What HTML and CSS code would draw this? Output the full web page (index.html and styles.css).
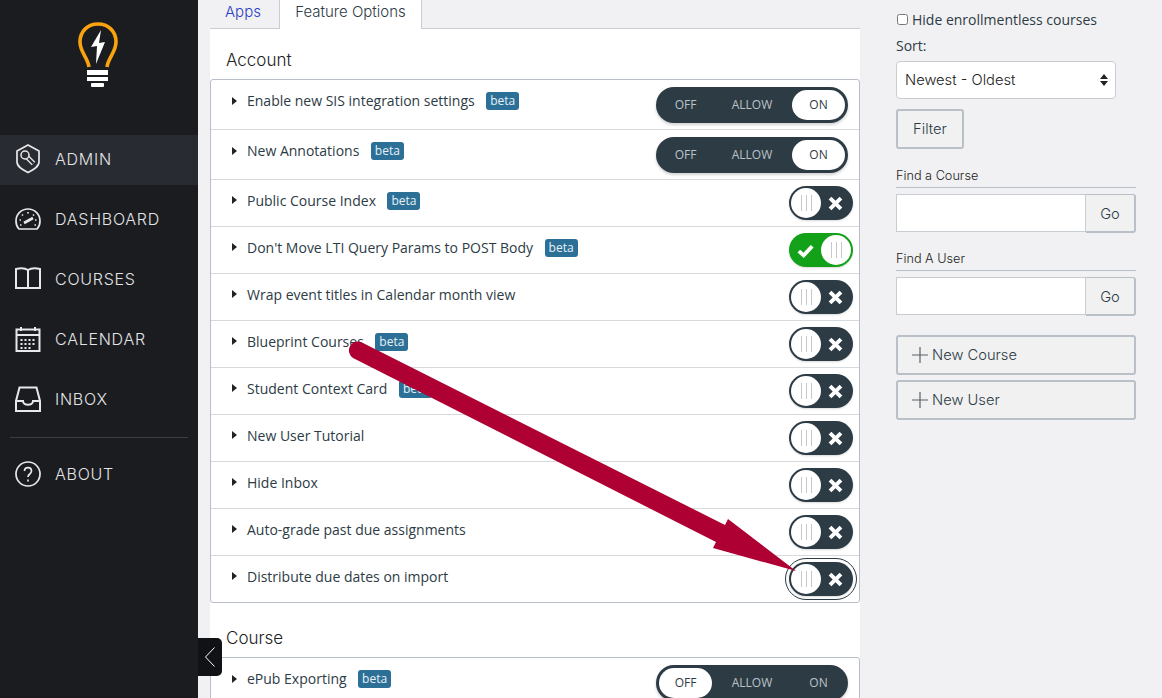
FILE: index.html
```html
<!DOCTYPE html>
<html>
	<head>
		<meta charset="UTF-8">
		<title>Feature Options</title>
		<link rel="stylesheet" href="styles.css">
	</head>
	<body>
		<nav class="sidebar">
			<div class="logo">
				<svg width="40" height="66" viewBox="0 0 40 66">
					<path d="M11 45 C10 36 2 30 2 20 C2 9 10 2 20 2 C30 2 38 9 38 20 C38 30 30 36 29 45" fill="none" stroke="#f9a30f" stroke-width="3.6"/>
					<path d="M23 8 L13 25 L19 24 L18 42 L27 20 L21 21 Z" fill="#fff"/>
					<rect x="9" y="48" width="21" height="5" fill="#fff"/>
					<rect x="9" y="55" width="21" height="4" fill="#fff"/>
					<rect x="13" y="61" width="13" height="4" rx="1" fill="#fff"/>
				</svg>
			</div>
			<a class="nav-item active" href="#">
				<svg class="nav-icon" viewBox="0 0 26 30"><path d="M13 1 L24 7 V18 C24 23 18 26 13 28.500 C8 26 2 23 2 18 V7 Z"/><path class="key" d="M11 12 L18.500 19.500"/><path class="key-in" d="M11 12 L18.500 19.500"/><circle class="key-head" cx="10" cy="11" r="4"/></svg>
				ADMIN
			</a>
			<a class="nav-item" href="#">
				<svg class="nav-icon" viewBox="0 0 26 24"><path d="M4 22 C2 20 1 17 1 14 C1 7 6.500 2 13 2 C19.500 2 25 7 25 14 C25 17 24 20 22 22 Z"/><path d="M9 16 L18 11" stroke-width="2.600"/><path d="M13 5 V6.500 M7 7.500 L8 8.500 M19 7.500 L18 8.500 M4.500 13 H6 M20 13 H21.500 M5 18 H6.500 M19.500 18 H21"/></svg>
				DASHBOARD
			</a>
			<a class="nav-item" href="#">
				<svg class="nav-icon thick" viewBox="0 0 26 24"><path d="M1 2 C5 1 10 1 13 3 C16 1 21 1 25 2 V21 H1 Z"/><path d="M13 3 V22"/></svg>
				COURSES
			</a>
			<a class="nav-item" href="#">
				<svg class="nav-icon thick" viewBox="0 0 26 26"><path d="M1.500 3.500 H24.500 V25 H1.500 Z"/><path d="M1.500 9 H24.500 M6 1 V5 M20 1 V5"/><path d="M5.500 14 H7.500 M9.500 14 H11.500 M13.500 14 H15.500 M17.500 14 H19.500 M5.500 18 H7.500 M9.500 18 H11.500 M13.500 18 H15.500 M17.500 18 H19.500 M5.500 22 H7.500 M9.500 22 H11.500 M13.500 22 H15.500"/></svg>
				CALENDAR
			</a>
			<a class="nav-item" href="#">
				<svg class="nav-icon thick" viewBox="0 0 26 26"><path d="M1 25 V15 L4.500 1.500 H21.500 L25 15 V25 Z"/><path d="M1 15 H8 C8 20 18 20 18 15 H25"/></svg>
				INBOX
			</a>
			<hr class="nav-rule">
			<a class="nav-item" href="#">
				<svg class="nav-icon" viewBox="0 0 26 26"><circle cx="13" cy="13" r="12"/><path d="M9.500 10 C9.500 5.500 16.500 5.500 16.500 10 C16.500 13 13 13 13 16"/><path d="M13 18.500 V20.500"/></svg>
				ABOUT
			</a>
		</nav>

		<a class="collapse" href="#">
			<svg width="12" height="22" viewBox="0 0 12 22"><path d="M10.500 1.500 L1.500 11 L10.500 20.500" fill="none" stroke="#fff" stroke-width="1"/></svg>
		</a>

		<div class="main">
			<ul class="tabs">
				<li><a href="#">Apps</a></li>
				<li class="current">Feature Options</li>
			</ul>

			<h2>Account</h2>
			<div class="features">
				<div class="row tall"><span class="caret"></span><span class="name">Enable new SIS integration settings</span><span class="beta">beta</span>
					<div class="tri"><span>OFF</span><span>ALLOW</span><span class="picked">ON</span></div></div>
				<div class="row tall"><span class="caret"></span><span class="name">New Annotations</span><span class="beta">beta</span>
					<div class="tri"><span>OFF</span><span>ALLOW</span><span class="picked">ON</span></div></div>
				<div class="row"><span class="caret"></span><span class="name">Public Course Index</span><span class="beta">beta</span>
					<div class="switch"><span class="knob"><i></i></span><svg class="mark" viewBox="0 0 14 14"><path d="M2.500 2.500 L11.500 11.500 M11.500 2.500 L2.500 11.500"/></svg></div></div>
				<div class="row"><span class="caret"></span><span class="name">Don't Move LTI Query Params to POST Body</span><span class="beta">beta</span>
					<div class="switch on"><svg class="mark" viewBox="0 0 14 14"><path d="M1.500 7.500 L5.500 11 L12.500 3.500"/></svg><span class="knob"><i></i></span></div></div>
				<div class="row"><span class="caret"></span><span class="name">Wrap event titles in Calendar month view</span>
					<div class="switch"><span class="knob"><i></i></span><svg class="mark" viewBox="0 0 14 14"><path d="M2.500 2.500 L11.500 11.500 M11.500 2.500 L2.500 11.500"/></svg></div></div>
				<div class="row"><span class="caret"></span><span class="name">Blueprint Courses</span><span class="beta">beta</span>
					<div class="switch"><span class="knob"><i></i></span><svg class="mark" viewBox="0 0 14 14"><path d="M2.500 2.500 L11.500 11.500 M11.500 2.500 L2.500 11.500"/></svg></div></div>
				<div class="row"><span class="caret"></span><span class="name">Student Context Card</span><span class="beta">beta</span>
					<div class="switch"><span class="knob"><i></i></span><svg class="mark" viewBox="0 0 14 14"><path d="M2.500 2.500 L11.500 11.500 M11.500 2.500 L2.500 11.500"/></svg></div></div>
				<div class="row"><span class="caret"></span><span class="name">New User Tutorial</span>
					<div class="switch"><span class="knob"><i></i></span><svg class="mark" viewBox="0 0 14 14"><path d="M2.500 2.500 L11.500 11.500 M11.500 2.500 L2.500 11.500"/></svg></div></div>
				<div class="row"><span class="caret"></span><span class="name">Hide Inbox</span>
					<div class="switch"><span class="knob"><i></i></span><svg class="mark" viewBox="0 0 14 14"><path d="M2.500 2.500 L11.500 11.500 M11.500 2.500 L2.500 11.500"/></svg></div></div>
				<div class="row"><span class="caret"></span><span class="name">Auto-grade past due assignments</span>
					<div class="switch"><span class="knob"><i></i></span><svg class="mark" viewBox="0 0 14 14"><path d="M2.500 2.500 L11.500 11.500 M11.500 2.500 L2.500 11.500"/></svg></div></div>
				<div class="row"><span class="caret"></span><span class="name">Distribute due dates on import</span>
					<div class="switch focus"><span class="knob"><i></i></span><svg class="mark" viewBox="0 0 14 14"><path d="M2.500 2.500 L11.500 11.500 M11.500 2.500 L2.500 11.500"/></svg></div></div>
			</div>

			<h2 class="second">Course</h2>
			<div class="features">
				<div class="row tall"><span class="caret"></span><span class="name">ePub Exporting</span><span class="beta">beta</span>
					<div class="tri"><span class="picked">OFF</span><span>ALLOW</span><span>ON</span></div></div>
			</div>
		</div>

		<aside class="side">
			<label class="check"><input type="checkbox">Hide enrollmentless courses</label>
			<div class="sort-label">Sort:</div>
			<div class="select"><span>Newest - Oldest</span>
				<svg width="8" height="12" viewBox="0 0 8 12"><path d="M4 0 L8 5 H0 Z M4 12 L0 7 H8 Z" fill="#222"/></svg>
			</div>
			<button class="btn filter">Filter</button>
			<div class="find first">Find a Course</div>
			<div class="search"><div class="field"></div><button class="btn go">Go</button></div>
			<div class="find">Find A User</div>
			<div class="search"><div class="field"></div><button class="btn go">Go</button></div>
			<button class="btn wide new-course"><svg width="16" height="16" viewBox="0 0 16 16"><path d="M0 8 H16 M8 0 V16" stroke="#5a626b" stroke-width="1.200"/></svg>New Course</button>
			<button class="btn wide"><svg width="16" height="16" viewBox="0 0 16 16"><path d="M0 8 H16 M8 0 V16" stroke="#5a626b" stroke-width="1.200"/></svg>New User</button>
		</aside>

		<svg class="arrow" width="1162" height="698" viewBox="0 0 1162 698">
			<path d="M361 342 L725 525 L728 519 L796 571 L713 548 L716 542 L353 358 A9 9 0 0 1 361 342 Z" fill="#ae0033"/>
		</svg>
	</body>
</html>
```

FILE: styles.css
```css
*{
	margin: 0;
	padding: 0;
	box-sizing: border-box;
}
li{
	list-style: none;
}
a{
	text-decoration: none;
}
html,body{
	height: 698px;
	overflow: hidden;
}
body{
	display: flex;
	background: #f1f1f3;
	font-family: "Open Sans", "Liberation Sans", sans-serif;
	color: #2d3b45;
	position: relative;
}

/* left nav */
.sidebar{
	width: 198px;
	flex: none;
	background: #1a1c20;
	display: flex;
	flex-direction: column;
	gap: 10px;
	padding-top: 135px;
	position: relative;
}
.logo{
	position: absolute;
	top: 22px;
	left: 78px;
}
.nav-item{
	height: 50px;
	display: flex;
	align-items: center;
	padding: 0 0 2px 15px;
	color: #e4e4e6;
	font-family: Inter, "Liberation Sans", sans-serif;
	font-size: 16px;
	font-weight: 300;
	letter-spacing: .75px;
}
.nav-item.active{
	background: #282b32;
}
.nav-icon{
	width: 26px;
	height: 30px;
	margin-right: 14px;
	fill: none;
	stroke: #e8e8ea;
	stroke-width: 1.700;
}
.nav-icon.thick{
	stroke-width: 2;
}
.nav-icon .key{
	stroke-width: 5;
}
.nav-icon .key-in{
	stroke: #282b32;
	stroke-width: 2.400;
}
.nav-icon .key-head{
	fill: #282b32;
	stroke-width: 1.500;
}
.nav-rule{
	border: 0;
	border-top: 1px solid #3c3e43;
	margin: 2px 10px;
}
.collapse{
	position: absolute;
	left: 198px;
	top: 638px;
	width: 24px;
	height: 38px;
	background: #111215;
	border-radius: 0 5px 5px 0;
	display: flex;
	align-items: center;
	justify-content: center;
	z-index: 2;
}

/* middle column */
.main{
	width: 650px;
	flex: none;
	margin-left: 12px;
	background: #fff;
}
.tabs{
	display: flex;
	height: 29px;
	background: #f1f1f3;
	border-bottom: 1px solid #c7cdd1;
	font-family: Inter, "Liberation Sans", sans-serif;
	font-size: 15px;
	font-weight: 300;
}
.tabs li{
	width: 69px;
	padding: 2px 0 0 15px;
}
.tabs a{
	color: #2b3fc4;
}
.tabs .current{
	width: 143px;
	background: #fff;
	border: solid #c7cdd1;
	border-width: 0 1px;
	height: 29px;
	padding: 2px 0 0;
	text-align: center;
	color: #2d3b45;
}
h2{
	font-family: Inter, "Liberation Sans", sans-serif;
	font-size: 17px;
	font-weight: 300;
	line-height: 22px;
	padding: 20px 0 8px 16px;
	height: 50px;
	color: #222;
}
h2.second{
	height: 54px;
	padding-top: 24px;
}
.features{
	border: 1px solid #b9bfc8;
	border-radius: 3px;
}
.row{
	height: 47px;
	border-bottom: 1px solid #d7d9dc;
	display: flex;
	align-items: center;
	padding: 0 6px 6px 21px;
	font-size: 14px;
}
.row.tall{
	height: 50px;
	padding-right: 11px;
	padding-bottom: 8px;
}
.row:last-child{
	border-bottom: 0;
	height: 46px;
}
.row.tall:last-child{
	height: 49px;
}
.caret{
	width: 0;
	height: 0;
	border-left: 5px solid #222;
	border-top: 4px solid transparent;
	border-bottom: 4px solid transparent;
	margin-right: 10px;
}
.beta{
	margin: 1px 0 0 11.500px;
	height: 18px;
	line-height: 18px;
	padding: 0 4px;
	background: #2c7098;
	color: #e9f0f5;
	border-radius: 3px;
	font-size: 12px;
}

/* toggles */
.tri{
	margin-left: auto;
	margin-top: 8px;
	width: 192px;
	height: 36px;
	background: #2d3b45;
	border-radius: 18px;
	display: flex;
	align-items: center;
	padding: 0 3px;
	font-size: 12px;
	color: #bcc3c8;
	box-shadow: 0 2px 3px rgba(0,0,0,.18);
}
.tri span{
	width: 53px;
	flex: none;
	text-align: center;
	height: 30px;
	line-height: 30px;
}
.tri span:nth-child(2){
	width: 80px;
}
.tri .picked{
	background: #fff;
	color: #2d3b45;
	border-radius: 15px;
}
.switch{
	margin-left: auto;
	margin-top: 6px;
	width: 64px;
	height: 34px;
	background: #2d3b45;
	border-radius: 17px;
	display: flex;
	align-items: center;
	justify-content: space-between;
	padding: 0 9px 0 2px;
	position: relative;
	box-shadow: 0 1px 2px rgba(0,0,0,.15);
}
.switch.on{
	background: #14a11a;
	padding: 0 2px 0 8px;
}
.switch.focus::after{
	content: "";
	position: absolute;
	inset: -4px;
	border: 1px solid #2d3b45;
	border-radius: 21px;
}
.knob{
	width: 30px;
	height: 30px;
	border-radius: 50%;
	background: #fff;
	display: flex;
	align-items: center;
	justify-content: center;
}
.knob i{
	width: 11px;
	height: 16px;
	border: solid #c6c9cc;
	border-width: 0 1px;
	position: relative;
}
.knob i::after{
	content: "";
	position: absolute;
	left: 4px;
	top: 0;
	width: 1px;
	height: 16px;
	background: #c6c9cc;
}
.mark{
	width: 17px;
	height: 17px;
	fill: none;
	stroke: #fff;
	stroke-width: 3.200;
}

/* right column */
.side{
	width: 240px;
	flex: none;
	margin-left: 36px;
	padding-top: 10px;
	font-size: 14px;
}
.check{
	display: flex;
	align-items: center;
	height: 18px;
	color: #2d3b45;
}
.check input{
	width: 11px;
	height: 11px;
	margin: 0 4px 0 1px;
}
.sort-label{
	margin-top: 9px;
	height: 24px;
	line-height: 18px;
}
.select{
	width: 220px;
	height: 38px;
	background: #fff;
	border: 1px solid #c7cdd1;
	border-radius: 4px;
	display: flex;
	align-items: center;
	justify-content: space-between;
	padding: 0 7px 0 8px;
	font-family: Inter, "Liberation Sans", sans-serif;
	font-size: 14.700px;
	font-weight: 300;
	color: #222;
}
.btn{
	display: block;
	background: #f1f1f2;
	border: 2px solid #b9c0c8;
	border-radius: 3px;
	color: #2d3b45;
	font-family: Inter, "Liberation Sans", sans-serif;
	font-size: 14.700px;
	font-weight: 300;
}
.filter{
	width: 68px;
	height: 40px;
	margin-top: 10px;
}
.find{
	margin-top: 19px;
	height: 19px;
	border-bottom: 1px solid #b9c0c8;
	font-family: Inter, "Liberation Sans", sans-serif;
	font-size: 12.700px;
	font-weight: 300;
	line-height: 14px;
	color: #222;
}
.find.first{
	margin-top: 20px;
}
.search{
	display: flex;
	margin-top: 6px;
}
.field{
	width: 190px;
	height: 38px;
	background: #fff;
	border: 1px solid #c7cdd1;
}
.go{
	width: 50px;
	height: 39px;
	padding-top: 1px;
	border-width: 1px 2px 2px 0;
	border-radius: 0 3px 3px 0;
}
.wide{
	width: 240px;
	height: 40px;
	margin-top: 5px;
	display: flex;
	align-items: center;
	gap: 4px;
	padding-left: 14px;
}
.new-course{
	margin-top: 19px;
}

.arrow{
	position: absolute;
	left: 0;
	top: 0;
	z-index: 3;
	pointer-events: none;
}
```
